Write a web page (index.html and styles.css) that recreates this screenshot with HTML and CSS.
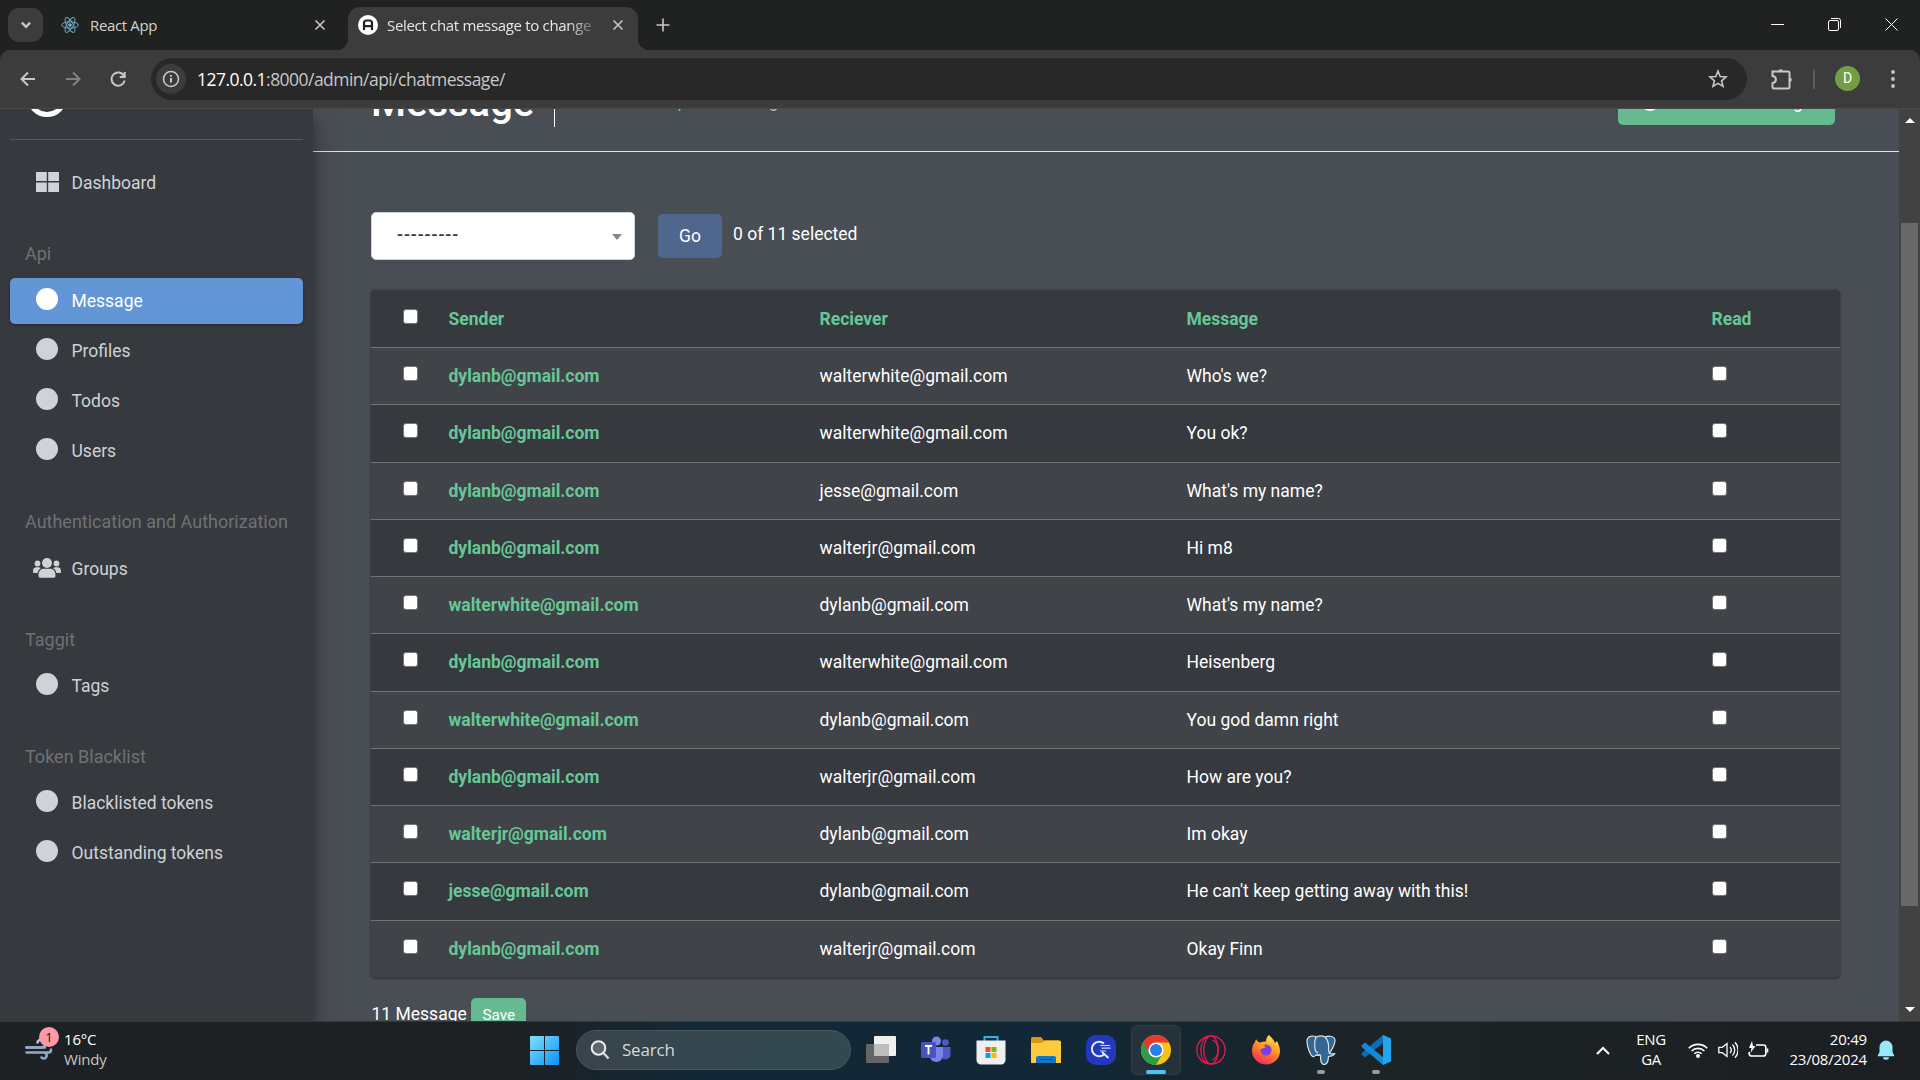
FILE: index.html
```html
<!DOCTYPE html>
<html lang="en">
<head>
<meta charset="utf-8">
<title>Select chat message to change</title>
<link rel="stylesheet" href="styles.css">
</head>
<body>
<div class="screen">
  <header class="tabstrip">
    <button class="tab-search"><svg width="14" height="14" viewBox="0 0 12 12"><path d="M2.500 4 6 7.500 9.500 4" class="ln w2"/></svg></button>
    <div class="tab">
      <svg class="favicon" width="18" height="18" viewBox="0 0 18 18" fill="none" stroke="#6aa9c4" stroke-width="1"><ellipse cx="9" cy="9" rx="8.300" ry="3.200"/><ellipse cx="9" cy="9" rx="8.300" ry="3.200" transform="rotate(60 9 9)"/><ellipse cx="9" cy="9" rx="8.300" ry="3.200" transform="rotate(120 9 9)"/><circle cx="9" cy="9" r="1.300" fill="#8fd3ec"/></svg>
      <span class="tab-title">React App</span>
      <svg width="12" height="12" viewBox="0 0 12 12"><path d="M1.500 1.500l9 9M10.500 1.500l-9 9" class="ln w15"/></svg>
    </div>
    <div class="tab active">
      <svg class="favicon" width="20" height="20" viewBox="0 0 20 20"><circle cx="10" cy="10" r="10" fill="#fff"/><path d="M6 15V8a2.500 2.500 0 0 1 2.500-2.500h3A2.500 2.500 0 0 1 14 8v7M6 11.200h8" fill="none" stroke="#222" stroke-width="2.200"/></svg>
      <span class="tab-title">Select chat message to change</span>
      <svg width="12" height="12" viewBox="0 0 12 12"><path d="M1.500 1.500l9 9M10.500 1.500l-9 9" class="ln w15"/></svg>
    </div>
    <svg class="new-tab" width="14" height="14" viewBox="0 0 14 14"><path d="M7 .5v13M.5 7h13" class="ln w15"/></svg>
    <div class="window-controls">
      <svg width="13" height="13" viewBox="0 0 13 13"><path d="M0 6.500h13" class="ln white"/></svg>
      <svg width="13" height="13" viewBox="0 0 13 13"><path d="M3 .5h7.500a2 2 0 0 1 2 2V10" class="ln white"/><rect x=".5" y="2.500" width="10" height="10" rx="1.500" class="ln white"/></svg>
      <svg width="13" height="13" viewBox="0 0 13 13"><path d="M.5.5l12 12M12.500.5l-12 12" class="ln white"/></svg>
    </div>
  </header>
  <div class="toolbar">
    <svg class="nav-btn" width="16" height="16" viewBox="0 0 16 16"><path d="M15 8H2M8 1.500 1.500 8 8 14.500" class="ln w2"/></svg>
    <svg class="nav-btn dim" width="16" height="16" viewBox="0 0 16 16"><path d="M1 8h13M8 1.500 14.500 8 8 14.500" class="ln w2"/></svg>
    <svg class="nav-btn" width="16" height="16" viewBox="0 0 16 16"><path d="M14 5A6.600 6.600 0 1 0 14.600 9.500M14.700 1v5h-5" class="ln w2"/></svg>
    <div class="address">
      <span class="info"><svg width="18" height="18" viewBox="0 0 18 18"><circle cx="9" cy="9" r="7.500" class="ln w15"/><path d="M9 8v4.500M9 5v1.700" class="ln w2"/></svg></span>
      <span class="url"><b>127.0.0.1</b>:8000/admin/api/chatmessage/</span>
      <svg class="star" width="20" height="20" viewBox="0 0 20 20"><path d="M10 2.200l2.200 5.400 5.800.4-4.400 3.800 1.400 5.600-5-3-5 3 1.400-5.600L2 8l5.800-.4z" class="ln w15"/></svg>
    </div>
    <svg class="ext" width="22" height="22" viewBox="0 0 22 22"><path d="M1.500 3.500h15.500a1.500 1.500 0 0 1 1.500 1.500v14a1.500 1.500 0 0 1-1.500 1.500H3A1.500 1.500 0 0 1 1.500 19v-4c4.500-.5 4.500-6.500 0-7z" class="ln w2"/><path d="M7.500 3.500a2.300 2.300 0 0 1 4.600 0zM18.500 9.500a2.300 2.300 0 0 1 0 4.600z" fill="#c7c7c7"/></svg>
    <span class="bar-sep"></span>
    <span class="avatar">D</span>
    <svg class="kebab" width="4" height="20" viewBox="0 0 4 20" fill="#c7c7c7"><circle cx="2" cy="3" r="1.900"/><circle cx="2" cy="10" r="1.900"/><circle cx="2" cy="17" r="1.900"/></svg>
  </div>

  <div class="page">
    <aside class="sidebar">
      <div class="brand"><svg width="40" height="40" viewBox="0 0 40 40"><circle cx="20" cy="20" r="17.500" fill="none" stroke="#fff" stroke-width="5"/></svg></div>
      <nav>
        <a class="link"><svg class="ico" width="23" height="20" viewBox="0 0 23 20"><path d="M0 0h10.800v9H0zM12.200 0H23v9H12.200zM0 10.500h10.800v9.500H0zM12.200 10.500H23v9.500H12.200z"/></svg>Dashboard</a>
        <h6 class="first">Api</h6>
        <a class="link current"><i class="dot"></i>Message</a>
        <a class="link"><i class="dot"></i>Profiles</a>
        <a class="link"><i class="dot"></i>Todos</a>
        <a class="link"><i class="dot"></i>Users</a>
        <h6 class="first">Authentication and Authorization</h6>
        <a class="link"><svg class="ico groups" width="28" height="22" viewBox="0 0 28 22"><circle cx="14" cy="6" r="5"/><circle cx="4.500" cy="6.500" r="2.900"/><circle cx="23.500" cy="6.500" r="2.900"/><path d="M5.500 18.500c0-4.300 2-6.800 5.500-6.800h6c3.500 0 5.500 2.500 5.500 6.800 0 1.500-.8 2.300-2.300 2.300H7.800c-1.500 0-2.300-.8-2.300-2.300zM0 14.500c0-2.800 1.200-4.200 3.500-4.200h2c1 0 1.800.3 2.400.9C6 12.200 5 13.800 4.600 16H1.400C.5 16 0 15.500 0 14.500zM28 14.500c0-2.800-1.200-4.200-3.500-4.200h-2c-1 0-1.800.3-2.400.9 1.900 1 2.900 2.600 3.300 4.800h3.200c.9 0 1.400-.5 1.400-1.500z"/></svg>Groups</a>
        <h6>Taggit</h6>
        <a class="link"><i class="dot"></i>Tags</a>
        <h6>Token Blacklist</h6>
        <a class="link"><i class="dot"></i>Blacklisted tokens</a>
        <a class="link"><i class="dot"></i>Outstanding tokens</a>
      </nav>
    </aside>
    <main class="content">
      <div class="page-head">
        <h1>Message</h1>
        <div class="crumbs"><a>Home</a><span>›</span><a>Api</a><span>›</span>Message</div>
        <button class="btn add"><svg width="18" height="18" viewBox="0 0 18 18"><circle cx="9" cy="9" r="9" fill="#fff"/><path d="M9 4v10M4 9h10" stroke="#66ba90" stroke-width="2.500"/></svg>Add chat message</button>
      </div>
      <div class="actions">
        <div class="select"><span>---------</span><svg width="10" height="6" viewBox="0 0 10 6"><path d="M0 0h10L5 6z" fill="#888"/></svg></div>
        <button class="btn go">Go</button>
        <span class="count">0 of 11 selected</span>
      </div>
      <table class="results">
        <thead><tr><th><i class="check"></i></th><th>Sender</th><th>Reciever</th><th>Message</th><th>Read</th></tr></thead>
        <tbody>
          <tr><td><i class="check"></i></td><th>dylanb@gmail.com</th><td>walterwhite@gmail.com</td><td>Who's we?</td><td><i class="check"></i></td></tr>
          <tr><td><i class="check"></i></td><th>dylanb@gmail.com</th><td>walterwhite@gmail.com</td><td>You ok?</td><td><i class="check"></i></td></tr>
          <tr><td><i class="check"></i></td><th>dylanb@gmail.com</th><td>jesse@gmail.com</td><td>What's my name?</td><td><i class="check"></i></td></tr>
          <tr><td><i class="check"></i></td><th>dylanb@gmail.com</th><td>walterjr@gmail.com</td><td>Hi m8</td><td><i class="check"></i></td></tr>
          <tr><td><i class="check"></i></td><th>walterwhite@gmail.com</th><td>dylanb@gmail.com</td><td>What's my name?</td><td><i class="check"></i></td></tr>
          <tr><td><i class="check"></i></td><th>dylanb@gmail.com</th><td>walterwhite@gmail.com</td><td>Heisenberg</td><td><i class="check"></i></td></tr>
          <tr><td><i class="check"></i></td><th>walterwhite@gmail.com</th><td>dylanb@gmail.com</td><td>You god damn right</td><td><i class="check"></i></td></tr>
          <tr><td><i class="check"></i></td><th>dylanb@gmail.com</th><td>walterjr@gmail.com</td><td>How are you?</td><td><i class="check"></i></td></tr>
          <tr><td><i class="check"></i></td><th>walterjr@gmail.com</th><td>dylanb@gmail.com</td><td>Im okay</td><td><i class="check"></i></td></tr>
          <tr><td><i class="check"></i></td><th>jesse@gmail.com</th><td>dylanb@gmail.com</td><td>He can't keep getting away with this!</td><td><i class="check"></i></td></tr>
          <tr><td><i class="check"></i></td><th>dylanb@gmail.com</th><td>walterjr@gmail.com</td><td>Okay Finn</td><td><i class="check"></i></td></tr>
        </tbody>
      </table>
      <div class="pager">11 Message <button class="btn save">Save</button></div>
    </main>
    <div class="scrollbar">
      <svg width="10" height="5" viewBox="0 0 10 5"><path d="M0 5h10L5 0z" fill="#fff"/></svg>
      <span class="thumb"></span>
      <svg width="10" height="5" viewBox="0 0 10 5"><path d="M0 0h10L5 5z" fill="#fff"/></svg>
    </div>
  </div>

  <footer class="taskbar">
    <div class="weather">
      <div class="wind">
        <svg width="30" height="26" viewBox="0 0 30 26" fill="none" stroke="#8fa9cc" stroke-width="2.600" stroke-linecap="round"><path d="M1.500 10.500H16a4 4 0 1 0-3.500-5" stroke="#b4c4dd"/><path d="M1.500 10.500H20M1.500 15.500h17a3 3 0 1 1-2 5M19 15.500h5a3 3 0 0 0 2-3"/></svg>
        <span class="badge">1</span>
      </div>
      <div class="weather-text"><span>16°C</span><span class="muted">Windy</span></div>
    </div>
    <div class="dock">
      <svg class="start" width="29" height="29" viewBox="0 0 29 29"><defs><linearGradient id="win" x1="0" y1="0" x2="1" y2="1"><stop offset="0" stop-color="#7fe0ff"/><stop offset="1" stop-color="#0a93f8"/></linearGradient></defs><path fill="url(#win)" d="M1 0h13v14H0V1a1 1 0 0 1 1-1zM15 0h13a1 1 0 0 1 1 1v13H15zM0 15h14v14H1a1 1 0 0 1-1-1zM15 15h14v13a1 1 0 0 1-1 1H15z"/></svg>
      <div class="search"><svg width="20" height="20" viewBox="0 0 20 20"><circle cx="8.500" cy="8" r="6.800" fill="#5c666c" stroke="#eee" stroke-width="2"/><path d="M13.500 13l5 5.500" stroke="#ddd" stroke-width="2.300"/></svg>Search</div>
      <div class="app"><svg width="30" height="30" viewBox="0 0 30 30"><rect y="9" width="23" height="19" rx="1" fill="#656565"/><rect x="8" y="1" width="22" height="20" rx="1" fill="#f0f0f0"/><path d="M8 9h15v12H8z" fill="#bdbdbd"/></svg></div>
      <div class="app"><svg width="30" height="30" viewBox="0 0 30 30"><circle cx="24.500" cy="7.500" r="3.300" fill="#5059c9"/><circle cx="15.500" cy="6" r="4.500" fill="#7b83eb"/><path d="M20 12h9.500v7.500a5 5 0 0 1-9.500 2z" fill="#5059c9"/><path d="M8.500 12H22v9a6.800 6.800 0 0 1-13.500 0z" fill="#7b83eb"/><rect y="7" width="15" height="16" rx="1.500" fill="#4b53bc"/><path d="M4 11h7M7.500 11v8.500" stroke="#fff" stroke-width="1.900"/></svg></div>
      <div class="app"><svg width="30" height="30" viewBox="0 0 30 30"><path d="M8.500 6V2h13v4" fill="none" stroke="#25b5ec" stroke-width="2"/><path d="M.5 5.500h29V25a4.500 4.500 0 0 1-4.500 4.500H5A4.500 4.500 0 0 1 .5 25z" fill="#efefef"/><path d="M9.500 12H14.500v5h-5z" fill="#f25022"/><path d="M15.500 12h5v5h-5z" fill="#7fba00"/><path d="M9.500 18h5v5h-5z" fill="#00a4ef"/><path d="M15.500 18h5v5h-5z" fill="#ffb900"/></svg></div>
      <div class="app"><svg width="30" height="30" viewBox="0 0 30 30"><path d="M0 3.500A1.500 1.500 0 0 1 1.500 2H10l3 3.500H28v5H0z" fill="#dc9a0a"/><path d="M0 8h11l3-2.500h14.500A1.500 1.500 0 0 1 30 7v21H0z" fill="#fdcb3e"/><path d="M5 28v-5a2 2 0 0 1 2-2h16a2 2 0 0 1 2 2v5z" fill="#0f76c8"/><path d="M9 24.500h12" stroke="#064f8e"/></svg></div>
      <div class="app"><svg width="30" height="30" viewBox="0 0 30 30"><rect width="30" height="30" rx="10" fill="#2239bd"/><path d="M18 8.500a7.300 7.300 0 1 0 0 11M16 17l6.500 6" fill="none" stroke="#e5e9ff" stroke-width="2"/><path d="M14 10.500h10M15.500 13.200h9M14 16h6" stroke="#d2d8ff" stroke-width="1.200"/></svg></div>
      <div class="app open"><svg width="30" height="30" viewBox="0 0 30 30"><circle cx="15" cy="15" r="15" fill="#fbc116"/><path d="M15 15 2 7.500A15 15 0 0 0 15 30l6.500-11.200z" fill="#2a9e48"/><path d="M2 7.500a15 15 0 0 1 26 0H15L8.500 18.700z" fill="#e33b2e"/><circle cx="15" cy="15" r="7.600" fill="#fff"/><circle cx="15" cy="15" r="6" fill="#2f7de9"/></svg><i class="run wide"></i></div>
      <div class="app"><svg width="30" height="30" viewBox="0 0 30 30" fill="none" stroke="#e8194c" stroke-width="1.300"><circle cx="15" cy="15" r="14.200"/><ellipse cx="15" cy="15" rx="7.300" ry="13.800"/><path d="M16.500 5c3.500 1.500 5.500 5.500 5.500 10s-2 8.500-5.500 10M12 1.300C2.500 5 2.500 25 12 28.700"/></svg></div>
      <div class="app"><svg width="30" height="30" viewBox="0 0 30 30"><defs><linearGradient id="fx" x1=".8" y1="0" x2=".3" y2="1"><stop offset="0" stop-color="#fff04a"/><stop offset=".5" stop-color="#ff8a22"/><stop offset="1" stop-color="#f5265f"/></linearGradient></defs><path d="M18 0c2 2 5 5 6 8l2-2c2 4 3 7 3 10a14 13.500 0 0 1-28 0c0-4 1-7 3-9l1-3c1 2 2 3 4 3.500 2-1 4-1 6-1 0-3 1-5 3-6.500z" fill="url(#fx)"/><circle cx="15" cy="15" r="5.500" fill="#7b3fe0"/><path d="M7 10c3-1 6 0 8 2-3 1-4 2-6 2s-2-2-2-4z" fill="#ff9b22"/></svg></div>
      <div class="app"><svg width="30" height="30" viewBox="0 0 30 30" fill="#336791" stroke="#dbe3ea" stroke-width="1.200" stroke-linejoin="round"><path d="M10 20c-2 2.500-4 2-5.500-1C2.500 15 1 10 1 6c0-5 6-6 9.500-4 3-1.500 6-1.500 8.500 0 4-1.500 10-1 10 3.500 0 4-3 9-5.500 13 2 .5 4 .3 5.500 0-1.500 2-3 3-6.500 3-.5 3.500 0 7.500-4 8-4 .3-4-5-4-9z"/><path d="M10.500 2C8 4 8.500 9 9 14c.2 2 1.500 3.500 3 4M19 2c3 3 4 7 3.500 12-.2 2 .5 3 1 4.500M14.500 19.500c-1.500.5-3 .7-4.500.5" fill="none"/></svg><i class="run"></i></div>
      <div class="app"><svg width="30" height="30" viewBox="0 0 30 30"><path d="M22 0l8 3.500v23L22 30z" fill="#25a7f0"/><path d="M22 0v8L4 22.500l-3.500-3v-1.200z" fill="#0a6fb8"/><path d="M22 30v-8L4 7.500l-3.500 3v1.200z" fill="#1489d6"/></svg><i class="run"></i></div>
    </div>
    <div class="tray">
      <svg class="chev" width="14" height="9" viewBox="0 0 14 9"><path d="M1 8l6-6 6 6" class="ln w2 white"/></svg>
      <div class="lang"><span>ENG</span><span>GA</span></div>
      <svg width="20" height="16" viewBox="0 0 20 16"><path d="M.8 6.200a13 13 0 0 1 18.400 0M3.600 9a9 9 0 0 1 12.800 0M6.300 11.700a5.300 5.300 0 0 1 7.400 0" class="ln w15 white"/><circle cx="10" cy="14" r="2" fill="#fff"/></svg>
      <svg width="20" height="18" viewBox="0 0 20 18"><path d="M.8 6.300v5.400h3.500L9 15.500v-13L4.300 6.300zM12 6a4.500 4.500 0 0 1 0 6M14.500 3.500a8 8 0 0 1 0 11M17 1.200a11.500 11.500 0 0 1 0 15.600" class="ln white w13"/></svg>
      <svg width="21" height="18" viewBox="0 0 21 18"><path d="M8 4h7.500a2.300 2.300 0 0 1 2.300 2.300v6.400a2.300 2.300 0 0 1-2.300 2.300H3.500a2.300 2.300 0 0 1-2.300-2.300V11" class="ln white w15"/><path d="M18.500 7.500h1.800v4h-1.800zM4 0 1 7h2.500L2.500 12 7.500 5H5z" fill="#fff"/></svg>
      <div class="clock"><span>20:49</span><span>23/08/2024</span></div>
      <svg class="bell" width="18" height="20" viewBox="0 0 18 20"><path d="M9 .5a6.500 6.500 0 0 0-6.500 6.500v5L.8 15.500v.7h16.400v-.7L15.500 12V7A6.500 6.500 0 0 0 9 .5zM6 17.200h6a3 2.500 0 0 1-6 0z" fill="#99e6ff"/></svg>
    </div>
  </footer>
</div>
</body>
</html>
```
FILE: styles.css
```css
* { box-sizing: border-box; }
body { margin: 0; background: #1f2221; }
button { font: inherit; border: 0; padding: 0; }
svg { display: block; flex: none; }
.screen { width: 1920px; height: 1080px; display: flex; flex-direction: column; overflow: hidden; font-family: "Open Sans", "Noto Sans", sans-serif; color: #e3e3e3; }
.ln { fill: none; stroke: #c7c7c7; stroke-width: 1; }
.w13 { stroke-width: 1.3; }
.w15 { stroke-width: 1.6; }
.w2 { stroke-width: 2; }
.white { stroke: #fff; }

.tabstrip { height: 50px; flex: none; display: flex; align-items: flex-start; background: #1f2221; padding: 7px 20px 0 8px; }
.tab-search { width: 35px; height: 34px; margin-top: 1px; border-radius: 11px; background: #3c3c3c; display: grid; place-items: center; }
.tab { width: 304px; height: 43px; display: flex; align-items: center; padding: 0 21px 8px 18px; font-size: 15px; }
.tab .favicon { margin-right: 11px; }
.tab-title { flex: 1; white-space: nowrap; overflow: hidden; letter-spacing: -0.35px; color: #d2d2d2; }
.tab.active { position: relative; width: 290px; padding-left: 10px; padding-right: 14px; margin-left: 1px; background: #3c3c3c; border-radius: 12px 12px 0 0; }
.tab.active .favicon { margin-right: 9px; }
.tab.active .tab-title { color: #e6e6e6; margin-right: 20px; letter-spacing: -0.32px; mask-image: linear-gradient(90deg, #000 88%, transparent 105%); }
.tab.active::before, .tab.active::after { content: ""; position: absolute; bottom: 0; width: 12px; height: 12px; }
.tab.active::before { left: -12px; background: radial-gradient(circle at 0 0, transparent 12px, #3c3c3c 12.500px); }
.tab.active::after { right: -12px; background: radial-gradient(circle at 100% 0, transparent 12px, #3c3c3c 12.500px); }
.new-tab { margin: 11px 0 0 18px; }
.window-controls { margin: 11px 2px 0 auto; display: flex; gap: 44px; }

.toolbar { height: 59px; flex: none; display: flex; align-items: center; background: #3c3c3c; padding: 0 25px 1px 20px; border-radius: 10px 10px 0 0; border-bottom: 1px solid #484a4a; }
.nav-btn { margin-right: 29px; }
.nav-btn.dim { opacity: .5; }
.address { width: 1596px; height: 42px; margin-left: -4px; border-radius: 21px; background: #282828; display: flex; align-items: center; padding: 0 19px 0 5px; }
.info { width: 30px; height: 30px; border-radius: 50%; background: #3c3c3c; display: grid; place-items: center; }
.url { flex: 1; margin-left: 11px; font-size: 17.500px; letter-spacing: -0.53px; color: #c7c7c7; }
.url b { font-weight: 400; color: #fff; }
.ext { margin-left: 24px; }
.bar-sep { width: 2px; height: 20px; margin: 0 20px; background: #5b5d5c; }
.avatar { width: 25px; height: 25px; border-radius: 50%; background: #769c45; color: #fff; font: 14px/25px Roboto, sans-serif; text-align: center; }
.kebab { margin-left: auto; }

.page { height: 912px; flex: none; display: flex; overflow: hidden; font: 17.500px/1.5 Roboto, sans-serif; background: #494d54; }
.sidebar { width: 313px; flex: none; background: #36393e; padding: 0 10px; box-shadow: 0 14px 28px rgba(0,0,0,.25), 0 10px 10px rgba(0,0,0,.22); z-index: 1; }
.brand { height: 31px; border-bottom: 1px solid #54575b; padding-left: 17px; display: flex; align-items: flex-end; }
.brand svg { margin-bottom: 22px; }
nav { display: flex; flex-direction: column; padding-top: 20px; }
.link { height: 46px; flex: none; margin-bottom: 4px; padding: 1px 0 0 23px; display: flex; align-items: center; color: #cfd2d6; border-radius: 5px; white-space: nowrap; }
.ico { fill: #cfd2d6; margin: 0 12.500px 4px 3px; }
.groups { margin: 0 10.500px 4px 0; }
.dot { width: 22px; height: 22px; margin: 0 13.500px 5px 3px; border-radius: 50%; background: #cfd2d6; flex: none; }
.current { background: #6296d6; color: #fff; box-shadow: 0 1px 3px rgba(0,0,0,.3); }
.current .dot { background: #fff; }
h6 { margin: 0; height: 67px; flex: none; padding: 31px 15px 0; font-weight: 400; font-size: 18px; line-height: 26px; color: #6f7275; white-space: nowrap; }
h6.first { height: 68px; }

.content { width: 1586px; flex: none; }
.page-head { height: 43px; border-bottom: 1px solid #e0e2e4; display: flex; align-items: flex-end; padding: 0 64px 0 58px; color: #fff; }
h1 { margin: 0 0 24px; font-size: 40px; line-height: 49px; font-weight: 500; width: 184px; border-right: 1px solid #fff; }
.crumbs { flex: 1; display: flex; margin: 0 0 37px 39px; color: #b9bcc0; line-height: 26px; white-space: nowrap; }
.crumbs a { color: #66c797; }
.crumbs span { width: 25px; text-align: center; }
.btn { border-radius: 5px; color: #fff; display: flex; align-items: center; justify-content: center; background: #66ba90; }
.add { width: 217px; height: 46px; margin-bottom: 26px; gap: 8px; }
.actions { display: flex; padding: 60px 0 0 58px; height: 138px; color: #fff; }
.select { width: 264px; height: 48px; border: 1px solid #ced4da; border-radius: 5px; background: #fff; color: #343a40; display: flex; align-items: center; justify-content: space-between; padding: 0 12px 2px 25px; }
.select span { letter-spacing: 0.95px; font-weight: 500; }
.select svg { margin-top: 4px; }
.go { width: 64px; height: 44px; margin: 2px 11px 0 23px; background: #50678d; }
.count { margin-top: 9px; }
.results { display: block; width: 1469px; height: 688px; margin-left: 58px; background: #36393e; border-radius: 5px; color: #fff; overflow: hidden; box-shadow: 0 0 1px rgba(0,0,0,.6), 0 1px 3px rgba(0,0,0,.3); }
.results thead, .results tbody { display: block; }
.results tr { display: grid; grid-template-columns: 62px 371px 367px 525px 1fr; height: 57.250px; padding-top: 15px; }
.results thead tr { height: 57px; padding-top: 16px; }
.results th, .results td { padding: 0 0 0 15.500px; text-align: left; }
.results tr > :first-child { padding-left: 31.500px; }
.results th { color: #66c797; font-weight: 700; }
.results tbody tr { border-top: 1px solid #707376; }
.results tbody tr:nth-child(odd) { background: #404347; }
.check { display: block; width: 15px; height: 15px; margin-top: 3px; border: 1px solid #767676; border-radius: 3px; background: #fff; }
.pager { display: flex; margin: 20px 0 0 58.500px; color: #fff; line-height: 33px; }
.save { width: 55px; height: 36px; margin-left: 4.500px; padding-bottom: 2px; font-size: 15.300px; }
.scrollbar { width: 21px; background: #424242; display: flex; flex-direction: column; align-items: center; padding: 9px 0 9px; }
.thumb { width: 17px; height: 683px; margin-top: 100px; margin-bottom: auto; background: #686868; }

.taskbar { height: 59px; flex: none; display: flex; align-items: center; background: linear-gradient(90deg, #1d2124 0 27%, #122836 36% 56%, #1d2326 72%, #1c1f22); border-top: 1px solid #33383a; color: #fff; font-size: 15px; line-height: 20px; padding: 0 25px 2px 0; }
.weather { width: 530px; display: flex; padding-left: 25px; gap: 9px; }
.wind { position: relative; padding-top: 8px; }
.badge { position: absolute; left: 14px; top: -2px; width: 20px; height: 20px; border-radius: 50%; background: #ff99a4; color: #111; font-size: 13px; text-align: center; }
.weather-text, .lang, .clock { display: flex; flex-direction: column; letter-spacing: -0.2px; padding-bottom: 3px; }
.muted { color: #c4c6c8; }
.dock { display: flex; align-items: center; }
.search { width: 275px; height: 40px; margin: 0 5px 0 17px; padding-left: 13px; border-radius: 20px; border: 1px solid #4a565d; background: linear-gradient(90deg, #3a434a, #344852 60%); display: flex; align-items: center; gap: 12px; font-size: 17px; letter-spacing: -0.2px; color: #d5d9db; }
.app { position: relative; width: 50px; height: 50px; margin-right: 5px; border-radius: 6px; display: grid; place-items: center; }
.open { background: #26323a; border: 1px solid #323d44; }
.run { position: absolute; bottom: 1px; left: 21px; width: 8px; height: 4px; border-radius: 2px; background: #999c9d; }
.wide { left: 14px; width: 20px; bottom: 0; background: #4cc2ff; }
.tray { margin-left: auto; display: flex; align-items: center; gap: 10px; }
.chev { margin-right: 16px; }
.lang { width: 30px; margin-right: 12px; align-items: center; letter-spacing: -0.4px; }
.clock { width: 88px; align-items: flex-end; }
```
